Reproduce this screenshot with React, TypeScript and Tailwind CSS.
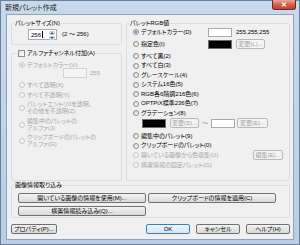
import React from "react";

type RadioProps = { checked?: boolean; disabled?: boolean };

const Radio = ({ checked = false, disabled = false }: RadioProps) => (
  <span
    className={`flex shrink-0 items-center justify-center w-[6px] h-[6px] rounded-full border ${
      disabled
        ? "border-[#c6c6c6] bg-[#f4f4f4]"
        : "border-[#8b8b8b] bg-gradient-to-br from-[#d6d6d6] to-white"
    }`}
  >
    {checked && (
      <span
        className={`w-[2px] h-[2px] rounded-full ${
          disabled ? "bg-[#b4b4b4]" : "bg-[#1f5fbf]"
        }`}
      />
    )}
  </span>
);

type OptionProps = {
  label: React.ReactNode;
  checked?: boolean;
  disabled?: boolean;
  className?: string;
  children?: React.ReactNode;
};

const Option = ({ label, checked, disabled, className = "", children }: OptionProps) => (
  <div className={`flex items-center ${className}`}>
    <Radio checked={checked} disabled={disabled} />
    <span
      className={`ml-[2px] leading-[7px] whitespace-nowrap ${
        disabled ? "text-[#a6a6a6]" : "text-black"
      }`}
    >
      {label}
    </span>
    {children}
  </div>
);

type BtnProps = {
  children: React.ReactNode;
  className?: string;
  disabled?: boolean;
  primary?: boolean;
};

const Btn = ({ children, className = "", disabled = false, primary = false }: BtnProps) => (
  <button
    type="button"
    className={`flex items-center justify-center h-[10px] rounded-[2px] border text-[6px] leading-none whitespace-nowrap ${
      disabled
        ? "border-[#b8b8b8] bg-[#f4f4f4] text-[#a0a0a0]"
        : primary
        ? "border-[#3c7fb1] bg-gradient-to-b from-[#eef5fb] to-[#d6e6f4] text-black"
        : "border-[#707070] bg-gradient-to-b from-[#f3f3f3] to-[#dadada] text-black"
    } ${className}`}
  >
    {children}
  </button>
);

const Swatch = ({ color }: { color: "white" | "black" }) => (
  <div
    className={`w-[24px] h-[9px] border shrink-0 ${
      color === "white" ? "bg-white border-[#a9a9a9]" : "bg-black border-[#6d6d6d]"
    }`}
  />
);

type GroupProps = {
  legend: React.ReactNode;
  className?: string;
  children?: React.ReactNode;
};

const Group = ({ legend, className = "", children }: GroupProps) => (
  <fieldset className={`border border-[#d5dfe5] rounded-[2px] ${className}`}>
    <legend className="ml-[2px] px-[1px] leading-[8px]">{legend}</legend>
    {children}
  </fieldset>
);

export default function App() {
  return (
    <div className="w-[300px] h-[245px] flex flex-col border border-[#6a7f98] bg-gradient-to-b from-[#c9d9ec] to-[#b9cde4] px-[5px] pb-[4px] text-[6px] text-black font-['Liberation_Sans','Noto_Sans_CJK_JP',sans-serif] [font-feature-settings:'palt']">
      {/* タイトルバー */}
      <div className="h-[13px] flex shrink-0">
        <span className="-ml-[1px] pt-[2px] text-[7px] leading-[9px] text-[#1b1b1b]">
          新規パレット作成
        </span>
        <div className="ml-auto -mr-[2px] -mt-[1px] w-[24px] h-[10px] rounded-b-[3px] border border-t-0 border-[#6e2a22] bg-gradient-to-b from-[#e9a99c] via-[#d2604c] to-[#c2432f] flex items-center justify-center text-white text-[7px] font-bold leading-none">
          ✕
        </div>
      </div>

      {/* クライアント領域 */}
      <div className="flex-1 flex flex-col bg-[#f0f0f0] border border-[#8fa3ba] pl-[4px] pr-[3px] pt-[4px]">
        <div className="flex gap-[4px] h-[162px] shrink-0">
          {/* 左カラム */}
          <div className="w-[111px] flex flex-col gap-[4px]">
            <Group legend="パレットサイズ(N)" className="h-[26px]">
              <div className="flex items-center pl-[16px] mt-[2px]">
                <div className="flex w-[29px] h-[11px] border border-[#abadb3] bg-white">
                  <div className="flex-1 flex items-center pl-[2px]">
                    <span className="leading-none">256</span>
                    <span className="w-[1px] h-[7px] bg-black ml-[1px]" />
                  </div>
                  <div className="w-[7px] flex flex-col gap-[1px] py-[1px] pr-[1px]">
                    <div className="flex-1 flex items-center justify-center rounded-[1px] border border-[#c2cfdc] bg-gradient-to-b from-[#f7f9fb] to-[#e2e8ee]">
                      <svg width="4" height="2" viewBox="0 0 4 2">
                        <path d="M0 2 L2 0 L4 2 Z" fill="#4a5766" />
                      </svg>
                    </div>
                    <div className="flex-1 flex items-center justify-center rounded-[1px] border border-[#c2cfdc] bg-gradient-to-b from-[#f7f9fb] to-[#e2e8ee]">
                      <svg width="4" height="2" viewBox="0 0 4 2">
                        <path d="M0 0 L2 2 L4 0 Z" fill="#4a5766" />
                      </svg>
                    </div>
                  </div>
                </div>
                <span className="ml-[5px]">(2 ～ 256)</span>
              </div>
            </Group>

            <fieldset className="h-[132px] border border-[#d5dfe5] rounded-[2px]">
              <legend className="ml-[6px] pr-[1px] leading-[8px]">
                <div className="flex items-center gap-[2px]">
                  <span className="w-[7px] h-[7px] border border-[#8e8f8f] bg-gradient-to-br from-[#dcdcdc] to-white" />
                  <span>アルファチャンネル付加(A)</span>
                </div>
              </legend>
              <div className="flex flex-col pl-[7px]">
                <Option
                  className="h-[10px] mt-[3px]"
                  label="デフォルトカラー(V)"
                  checked
                  disabled
                />
                <div className="flex items-center h-[10px] -mt-[2px] pl-[44px]">
                  <div className="w-[24px] h-[10px] border border-[#d3d3d3] bg-[#f4f4f4]" />
                  <span className="ml-[3px] text-[#a6a6a6]">255</span>
                </div>
                <Option className="h-[10px] mt-[2px]" label="すべて透明(X)" disabled />
                <Option className="h-[10px]" label="すべて不透明(Y)" disabled />
                <Option
                  className="h-[14px] mt-[1px]"
                  label={
                    <>
                      パレットエントリ0を透明、
                      <br />
                      その他を不透明(Z)
                    </>
                  }
                  disabled
                />
                <Option
                  className="h-[14px] mt-[3px]"
                  label={
                    <>
                      編集中のパレットの
                      <br />
                      アルファ(J)
                    </>
                  }
                  disabled
                />
                <Option
                  className="h-[14px] mt-[2px]"
                  label={
                    <>
                      クリップボードのパレットの
                      <br />
                      アルファ(G)
                    </>
                  }
                  disabled
                />
              </div>
            </fieldset>
          </div>

          {/* 右カラム */}
          <Group legend="パレットRGB値" className="flex-1 h-[162px]">
            <div className="flex flex-col pl-[6px] pr-[6px]">
              <div className="flex items-center h-[10px]">
                <Option className="w-[75px]" label="デフォルトカラー(D)" checked />
                <Swatch color="white" />
                <span className="ml-[4px]">255,255,255</span>
              </div>
              <div className="flex items-center h-[10px] mt-[2px]">
                <Option className="w-[75px]" label="指定色(I)" />
                <Swatch color="black" />
                <Btn disabled className="ml-[4px] w-[29px]">変更(L)...</Btn>
              </div>
              <Option className="h-[10px] mt-[2px]" label="すべて黒(2)" />
              <Option className="h-[9.5px]" label="すべて白(3)" />
              <Option className="h-[9.5px]" label="グレースケール(4)" />
              <Option className="h-[9.5px]" label="システム16色(5)" />
              <Option className="h-[9.5px]" label="RGB各6階調216色(6)" />
              <Option className="h-[9.5px]" label="OPTPiX標準236色(7)" />
              <Option className="h-[9.5px]" label="グラデーション(8)" />
              <div className="flex items-center h-[10px] ml-[9px]">
                <Swatch color="black" />
                <Btn disabled className="ml-[4px] w-[29px]">変更(S)...</Btn>
                <span className="mx-[3px] text-[#8a8a8a]">～</span>
                <Swatch color="white" />
                <Btn disabled className="ml-[2px] w-[31px]">変更(E)...</Btn>
              </div>
              <Option className="h-[10px] mt-[3px]" label="編集中のパレット(9)" />
              <Option className="h-[9.5px]" label="クリップボードのパレット(0)" />
              <Option className="h-[9.5px]" label="開いている画像から色収集(U)" disabled>
                <Btn disabled className="ml-auto w-[30px]">編集(E)...</Btn>
              </Option>
              <Option className="h-[10px]" label="横置情報の固定パレット(G)" disabled />
            </div>
          </Group>
        </div>

        {/* 画像情報取り込み */}
        <Group legend="画像情報取り込み" className="h-[37px] shrink-0">
          <div className="flex flex-col pl-[6px] mt-[4px] gap-[3px]">
            <div className="flex gap-[2px]">
              <Btn className="w-[128px]">開いている画像の情報を使用(M)...</Btn>
              <Btn className="w-[128px]">クリップボードの情報を適用(C)</Btn>
            </div>
            <Btn className="w-[128px]">横置情報読み込み(Q)...</Btn>
          </div>
        </Group>

        {/* ボタン行 */}
        <div className="flex mt-[6px]">
          <Btn className="w-[46px]">プロパティ(P)...</Btn>
          <Btn primary className="ml-auto w-[44px]">OK</Btn>
          <Btn className="ml-[6px] w-[44px]">キャンセル</Btn>
          <Btn className="ml-[6px] w-[44px]">ヘルプ(H)</Btn>
        </div>
      </div>
    </div>
  );
}
